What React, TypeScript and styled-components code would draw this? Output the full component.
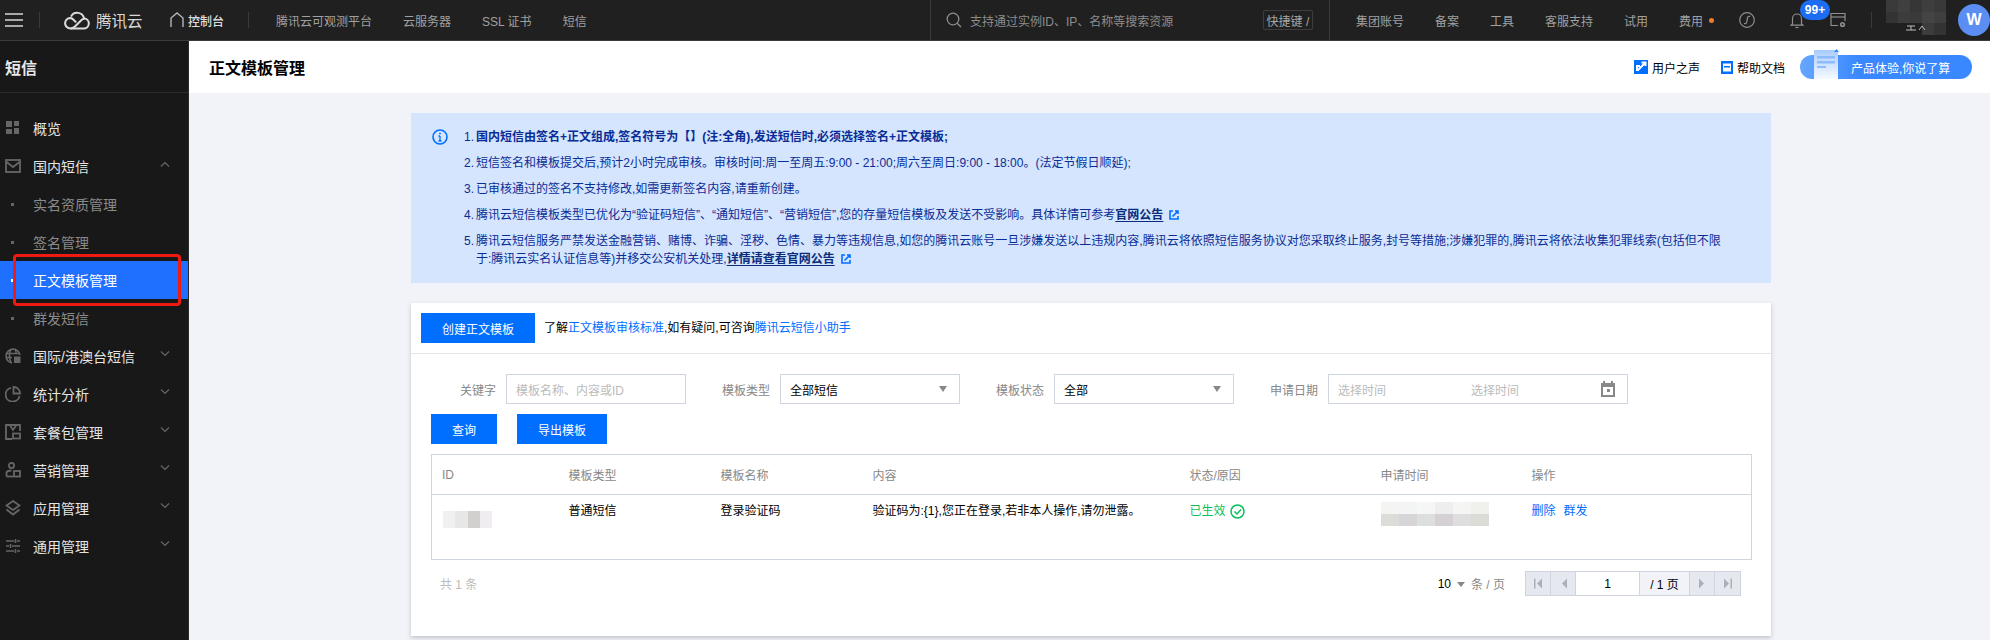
import React from 'react'
import styled, { createGlobalStyle } from 'styled-components'

const GlobalStyle = createGlobalStyle`
  html, body {
    margin: 0;
    padding: 0;
    width: 1990px;
    height: 640px;
    overflow: hidden;
    background: #f2f3f8;
  }
  * { box-sizing: border-box; }
  body {
    font-family: "Liberation Sans", "Noto Sans CJK SC", sans-serif;
    font-size: 12px;
    color: #000;
  }
`

const Page = styled.div`
  width: 1990px;
  height: 640px;
  display: flex;
  flex-direction: column;
  overflow: hidden;
`

/* top bar */
const TopBar = styled.header`
  height: 41px;
  flex: none;
  display: flex;
  align-items: center;
  background: #202020;
  border-bottom: 1px solid #3b3b3b;
  color: #a0a0a0;
`

const BarDivider = styled.span<{ $left: number; $right: number }>`
  width: 1px;
  height: 16px;
  flex: none;
  background: #3a3a3a;
  margin: 0 ${(p) => p.$right}px 0 ${(p) => p.$left}px;
`

const Burger = styled.span`
  margin-left: 5px;
  width: 18px;
  height: 14px;
  flex: none;
  border-top: 2px solid #a9a9a9;
  border-bottom: 2px solid #a9a9a9;
  position: relative;
  &::after {
    content: '';
    position: absolute;
    left: 0;
    right: 0;
    top: 4px;
    height: 2px;
    background: #a9a9a9;
  }
`

const LogoText = styled.span`
  font-size: 15.5px;
  color: #d8d8d8;
  margin-left: 6px;
  letter-spacing: 0;
  width: 47px;
  white-space: nowrap;
`

const ConsoleLink = styled.span`
  display: flex;
  align-items: center;
  gap: 4px;
  margin-left: 27px;
  color: #dedede;
  font-weight: 500;
`

const NavGroup = styled.nav`
  display: flex;
  gap: 31px;
  white-space: nowrap;
`

const SearchBox = styled.div`
  margin-left: auto;
  width: 400px;
  height: 40px;
  display: flex;
  align-items: center;
  border-left: 1px solid #3a3a3a;
  border-right: 1px solid #3a3a3a;
  padding-left: 15px;
  color: #8d8d8d;
`

const SearchText = styled.span`
  margin-left: 8px;
  flex: 1;
  white-space: nowrap;
`

const KeyHint = styled.span`
  width: 50px;
  height: 20px;
  margin-right: 16px;
  border: 1px solid #3d3d3d;
  border-radius: 2px;
  color: #a8a8a8;
  font-size: 12px;
  display: flex;
  align-items: center;
  justify-content: center;
  white-space: nowrap;
`

const RightGroup = styled.div`
  display: flex;
  align-items: center;
  margin-left: 26px;
  white-space: nowrap;
`

const FeeDot = styled.span`
  width: 5px;
  height: 5px;
  border-radius: 50%;
  background: #ed7b2f;
  margin-left: 6px;
`

const BellWrap = styled.span`
  position: relative;
  width: 14px;
  height: 18px;
  margin-left: 35px;
  display: flex;
`

const Badge = styled.span`
  position: absolute;
  left: 10px;
  top: -11px;
  width: 30px;
  height: 20px;
  border-radius: 10px;
  background: #1d6df2;
  color: #fff;
  font-size: 12px;
  font-weight: 700;
  display: flex;
  align-items: center;
  justify-content: center;
`

const Avatar = styled.span`
  width: 32px;
  height: 32px;
  border-radius: 50%;
  background: #5b8df2;
  color: #fff;
  font-size: 16px;
  font-weight: 700;
  display: flex;
  align-items: center;
  justify-content: center;
  margin-left: 12px;
`

const TopMosaicWrap = styled.div`
  position: relative;
  width: 60px;
  height: 40px;
  margin-left: 14px;
  align-self: flex-start;
`

const Mosaic = styled.div<{ $cols: number; $w: number; $h: number }>`
  width: ${(p) => p.$w}px;
  height: ${(p) => p.$h}px;
  display: grid;
  grid-template-columns: repeat(${(p) => p.$cols}, 1fr);
  grid-auto-rows: 1fr;
`

const Cell = styled.span<{ $c: string }>`
  background: ${(p) => p.$c};
`

const Fragment = styled.svg`
  position: absolute;
  left: 20px;
  top: 25px;
`

/* body */
const Body = styled.div`
  flex: 1;
  display: flex;
  min-height: 0;
`

const Sidebar = styled.aside`
  width: 189px;
  flex: none;
  background: #181818;
  border-right: 1px solid #2c2c2c;
  position: relative;
`

const SideTitle = styled.div`
  height: 52px;
  border-bottom: 1px solid #2c2c2c;
  display: flex;
  align-items: center;
  padding-left: 5px;
  color: #e8e8e8;
  font-size: 16px;
  font-weight: 700;
`

const Menu = styled.ul`
  list-style: none;
  margin: 16px 0 0;
  padding: 0;
`

const MenuRow = styled.li<{ $sub?: boolean; $active?: boolean }>`
  height: 38px;
  display: flex;
  align-items: center;
  font-size: 14px;
  padding-left: 5px;
  background: ${(p) => (p.$active ? '#1f70ff' : 'transparent')};
  color: ${(p) => (p.$active ? '#fff' : p.$sub ? '#8a8a8a' : '#e4e4e4')};
`

const MenuIcon = styled.span`
  width: 16px;
  height: 16px;
  margin-right: 12px;
  flex: none;
  display: flex;
`

const Dot = styled.span<{ $active?: boolean }>`
  width: 3px;
  height: 3px;
  margin: 0 19px 0 6px;
  flex: none;
  background: ${(p) => (p.$active ? '#fff' : '#666')};
`

const Chevron = styled.svg`
  margin-left: auto;
  margin-right: 18px;
  position: relative;
  top: -2px;
`

const RedMark = styled.div`
  position: absolute;
  left: 13px;
  top: 213px;
  width: 168px;
  height: 52px;
  border: 3px solid #f01a10;
  border-radius: 4px;
  pointer-events: none;
`

const Main = styled.main`
  flex: 1;
  min-width: 0;
`

const TitleBar = styled.div`
  height: 52px;
  background: #fff;
  display: flex;
  align-items: center;
  padding: 0 18px 0 20px;
`

const PageTitle = styled.h1`
  margin: 0;
  font-size: 16px;
  font-weight: 700;
  color: #000;
`

const HeadLinks = styled.div`
  margin-left: auto;
  display: flex;
  align-items: center;
`

const HeadLink = styled.span<{ $gap: number }>`
  display: flex;
  align-items: center;
  gap: 4px;
  margin-right: ${(p) => p.$gap}px;
  color: #000;
`

const FeedbackPill = styled.div`
  position: relative;
  width: 172px;
  height: 24px;
  border-radius: 12px;
  background: linear-gradient(90deg, #66a6ff 0%, #3a88ff 35%, #3a88ff 100%);
  color: #fff;
  display: flex;
  align-items: center;
  padding-left: 51px;
  white-space: nowrap;
`

const FeedbackDoc = styled.svg`
  position: absolute;
  left: 14px;
  top: -6px;
`

const Notice = styled.section`
  margin: 20px 0 0 222px;
  width: 1360px;
  height: 170px;
  background: #d4e5fd;
  display: flex;
  padding: 15px 0 0 21px;
`

const NoticeIcon = styled.svg`
  flex: none;
  margin-top: 1px;
`

const NoticeList = styled.ol`
  list-style: none;
  margin: 0 0 0 16px;
  padding: 0;
  width: 1268px;
  color: #0a2c96;
  line-height: 18px;
`

const NoticeItem = styled.li<{ $strong?: boolean }>`
  display: flex;
  margin-bottom: 8px;
  font-weight: ${(p) => (p.$strong ? 700 : 400)};
`

const NoticeNum = styled.span`
  width: 12px;
  flex: none;
  font-weight: 400;
`

const NoticeLink = styled.a`
  font-weight: 700;
  color: #0a2c7c;
  text-decoration: underline;
  text-underline-offset: 2px;
`

const ExtIcon = styled.svg`
  margin-left: 6px;
  vertical-align: -1px;
`

const Card = styled.section`
  margin: 20px 0 0 222px;
  width: 1360px;
  height: 333px;
  background: #fff;
  box-shadow: 0 2px 4px rgba(54, 58, 80, 0.25);
`

const ActionRow = styled.div`
  height: 51px;
  padding: 10px;
  display: flex;
  align-items: flex-start;
  border-bottom: 1px solid #e5e5e5;
`

const PrimaryButton = styled.button<{ $w: number }>`
  width: ${(p) => p.$w}px;
  height: 30px;
  flex: none;
  padding: 0;
  border: 0;
  background: #006eff;
  color: #fff;
  font: inherit;
`

const Hint = styled.span`
  margin-left: 9px;
  line-height: 30px;
`

const BlueText = styled.span`
  color: #006eff;
`

const Filters = styled.div`
  padding: 20px 0 0 49px;
  display: flex;
  align-items: center;
`

const FilterLabel = styled.label`
  color: #888;
  margin-right: 10px;
  white-space: nowrap;
`

const Field = styled.div<{ $w: number; $gap?: number }>`
  width: ${(p) => p.$w}px;
  height: 30px;
  margin-right: ${(p) => p.$gap ?? 36}px;
  border: 1px solid #cfd5de;
  display: flex;
  align-items: center;
  padding: 0 9px;
  flex: none;
`

const Placeholder = styled.span<{ $w?: number }>`
  color: #bbb;
  ${(p) => (p.$w ? `width: ${p.$w}px;` : '')}
`

const Caret = styled.span`
  margin-left: auto;
  margin-right: 3px;
  width: 0;
  height: 0;
  border-left: 4px solid transparent;
  border-right: 4px solid transparent;
  border-top: 6px solid #888;
`

const QueryRow = styled.div`
  display: flex;
  gap: 20px;
  padding: 10px 0 0 20px;
`

const Table = styled.table`
  margin: 10px 0 0 20px;
  width: 1320px;
  table-layout: fixed;
  border-collapse: collapse;
  border: 1px solid #cfd5de;
`

const HeadCell = styled.th`
  height: 40px;
  padding: 0 10px;
  text-align: left;
  font-weight: 400;
  color: #888;
  border-bottom: 1px solid #cfd5de;
`

const DataCell = styled.td<{ $pr?: number }>`
  height: 65px;
  padding: 7px ${(p) => p.$pr ?? 10}px 14px 10px;
  vertical-align: top;
  line-height: 18px;
`

const StatusText = styled.span`
  color: #0abf5b;
  display: flex;
  align-items: center;
  gap: 4px;
`

const CellMosaic = styled.div<{ $top: number }>`
  margin: ${(p) => p.$top}px 0 0 1px;
`

const OpLink = styled.a`
  color: #006eff;
  margin-right: 8px;
`

const TableFoot = styled.div`
  padding: 11px 10px 0 29px;
  width: 1340px;
  display: flex;
  align-items: center;
  height: 36px;
  color: #bbb;
`

const PageSize = styled.div`
  margin-left: auto;
  display: flex;
  align-items: center;
  margin-right: 20px;
  gap: 4px;
  color: #888;
`

const PageSizeNum = styled.span`
  color: #000;
`

const SmallCaret = styled.span`
  width: 0;
  height: 0;
  margin: 2px 2px 0 2px;
  border-left: 4px solid transparent;
  border-right: 4px solid transparent;
  border-top: 5px solid #888;
`

const Pager = styled.div`
  display: flex;
  height: 25px;
  border: 1px solid #cfd5de;
  margin-right: -0px;
`

const PagerBtn = styled.span`
  width: 25px;
  background: #e5e8ee;
  border-right: 1px solid #cfd5de;
  display: flex;
  align-items: center;
  justify-content: center;
  &:last-child {
    border-right: 0;
  }
`

const PagerInput = styled.span`
  width: 64px;
  background: #fff;
  border-right: 1px solid #cfd5de;
  color: #000;
  display: flex;
  align-items: center;
  justify-content: center;
`

const PagerTotal = styled.span`
  width: 50px;
  background: #f2f3f8;
  border-right: 1px solid #cfd5de;
  color: #000;
  display: flex;
  align-items: center;
  justify-content: center;
`

const stroke = '#666'

const CloudLogo = () => (
  <svg width="26" height="20" viewBox="0 0 26 20" fill="none" stroke="#dcdcdc" strokeWidth="2" style={{ marginLeft: 24 }}>
    <path d="M6.5 18.5h13a5 5 0 0 0 .6-10A7 7 0 0 0 7 6.6" />
    <path d="M12 12.5 C10 10 8.6 8 6.2 8 a5.2 5.2 0 0 0 .3 10.5 c2.5 0 4-1.5 6-3.5 l4-4 c1.2-1.2 2.2-2.3 4-2.5" />
  </svg>
)

const HomeIcon = () => (
  <svg width="14" height="16" viewBox="0 0 14 16" fill="none" stroke="#b5b5b5" strokeWidth="1.4">
    <path d="M1 15V6l6-5 6 5v9" />
    <path d="M5.5 15V9h3v6" strokeWidth="0" />
  </svg>
)

const SearchIcon = () => (
  <svg width="16" height="16" viewBox="0 0 16 16" fill="none" stroke="#8d8d8d" strokeWidth="1.3">
    <circle cx="7" cy="7" r="5.8" />
    <path d="M11.2 11.2 15 15" />
  </svg>
)

const SwirlIcon = () => (
  <svg width="16" height="16" viewBox="0 0 16 16" fill="none" stroke="#8f8f8f" strokeWidth="1.2" style={{ marginLeft: 25 }}>
    <circle cx="8" cy="8" r="7.3" />
    <path d="M5 11.5c1.8.5 2.6-.6 2.9-2.2l.5-3c.3-1.6 1.2-2.4 2.8-1.9" />
  </svg>
)

const BellIcon = () => (
  <svg width="14" height="18" viewBox="0 0 14 18" fill="none" stroke="#8f8f8f" strokeWidth="1.2">
    <path d="M2.5 13V7.5a4.5 4.5 0 0 1 9 0V13l1.5 1.2H1z" />
    <path d="M5.5 16.5h3" />
  </svg>
)

const ConsoleGear = () => (
  <svg width="16" height="16" viewBox="0 0 16 16" fill="none" stroke="#8f8f8f" strokeWidth="1.2" style={{ marginLeft: 26 }}>
    <path d="M8 13.5H1V1.5h14V9" />
    <path d="M1 5h14" />
    <circle cx="12.5" cy="12.5" r="1.8" strokeWidth="1.6" />
  </svg>
)

const icons: Record<string, React.ReactNode> = {
  overview: (
    <svg width="16" height="16" viewBox="0 0 16 16" fill={stroke}>
      <rect x="1" y="1" width="6" height="6" />
      <rect x="9" y="1" width="5" height="5" />
      <rect x="1" y="9" width="6" height="5" />
      <rect x="9" y="8" width="5" height="6" />
    </svg>
  ),
  mail: (
    <svg width="16" height="16" viewBox="0 0 16 16" fill="none" stroke={stroke} strokeWidth="1.8">
      <rect x="1" y="2" width="14" height="12" />
      <path d="M1.5 4 8 9l6.5-5" />
    </svg>
  ),
  globe: (
    <svg width="16" height="16" viewBox="0 0 16 16" fill="none" stroke={stroke} strokeWidth="1.6">
      <path d="M7 15A7 7 0 1 1 15 7" />
      <path d="M1 5.5h13M1 9.5h6M6 1c-2 4-2 9 0 13.500M10 1c.8 1.500 1.200 3 1.300 5" />
      <rect x="9" y="8.500" width="6.500" height="6.500" fill={stroke} stroke="none" />
    </svg>
  ),
  pie: (
    <svg width="16" height="16" viewBox="0 0 16 16" fill="none" stroke={stroke} strokeWidth="1.800">
      <path d="M6 1.800A7 7 0 1 0 14.500 10" />
      <path d="M8.500 1v6.500H15A6.500 6.500 0 0 0 8.500 1z" />
    </svg>
  ),
  pack: (
    <svg width="16" height="16" viewBox="0 0 16 16" fill="none" stroke={stroke} strokeWidth="1.800">
      <path d="M7 15H1V1h14v6" />
      <path d="M5 1.500 8 6l3-4.500" />
      <rect x="8" y="9.500" width="7" height="5" />
    </svg>
  ),
  user: (
    <svg width="16" height="16" viewBox="0 0 16 16" fill="none" stroke={stroke} strokeWidth="1.800">
      <circle cx="6.500" cy="3.500" r="2.600" />
      <path d="M1.500 14.500V11c0-1.500 2-2.500 5-2.500" />
      <rect x="9" y="9" width="6" height="5.500" />
      <path d="M1.500 14.500h7" />
    </svg>
  ),
  layers: (
    <svg width="16" height="16" viewBox="0 0 16 16" fill="none" stroke={stroke} strokeWidth="1.800">
      <path d="M8 1 14.500 5.500 8 10 1.500 5.500z" />
      <path d="M1.500 9.500 8 14.500l6.500-5" />
    </svg>
  ),
  sliders: (
    <svg width="16" height="16" viewBox="0 0 16 16" fill="none" stroke={stroke} strokeWidth="1.600">
      <path d="M1 3h8M12 3h3M1 8h3M7 8h8M1 13h8M12 13h3" />
      <path d="M10.500 1v4M5.500 6v4M10.500 11v4" />
    </svg>
  )
}

const DownChevron = ({ up }: { up?: boolean }) => (
  <Chevron width="10" height="6" viewBox="0 0 10 6" fill="none" stroke="#666" strokeWidth="1.200">
    <path d={up ? 'M1 5.500 5 1.500l4 4' : 'M1 .5l4 4 4-4'} />
  </Chevron>
)

const menuItems = [
  { label: '概览', icon: 'overview' },
  { label: '国内短信', icon: 'mail', open: true },
  { label: '实名资质管理', sub: true },
  { label: '签名管理', sub: true },
  { label: '正文模板管理', sub: true, active: true },
  { label: '群发短信', sub: true },
  { label: '国际/港澳台短信', icon: 'globe', arrow: true },
  { label: '统计分析', icon: 'pie', arrow: true },
  { label: '套餐包管理', icon: 'pack', arrow: true },
  { label: '营销管理', icon: 'user', arrow: true },
  { label: '应用管理', icon: 'layers', arrow: true },
  { label: '通用管理', icon: 'sliders', arrow: true }
]

const topMosaic = [
  '#3a3a3a', '#404040', '#363636', '#3e3e3e', '#393939',
  '#333333', '#3c3c3c', '#3a3a3a', '#444444', '#3f3f3f',
  'transparent', 'transparent', 'transparent', '#3c3c3c', '#333333'
]
const idMosaic = ['#f1f0f1', '#e9e6e8', '#d2d0cf', '#efedef']
const timeMosaic = [
  '#f4f5f3', '#f3f5f4', '#f5f6f5', '#eeeeee', '#f5f5f3', '#f0f0ec',
  '#dcdcd8', '#d8d5d9', '#dddfdf', '#d4d0d4', '#dedede', '#dcdcd6'
]

const External = () => (
  <ExtIcon width="10" height="10" viewBox="0 0 10 10" fill="none" stroke="#006eff" strokeWidth="1.600">
    <path d="M4 1H1v8h8V6" />
    <path d="M3.500 6.500 9 1M6 1h3v3" />
  </ExtIcon>
)

const PagerGlyph = ({ dir, edge }: { dir: 'l' | 'r'; edge?: boolean }) => (
  <svg width="9" height="11" viewBox="0 0 9 11" fill="#a9b0bb">
    {dir === 'l' ? (
      <>
        {edge && <rect x="0" y="0.500" width="1.500" height="10" />}
        <path d="M8 .5v10L3 5.500z" />
      </>
    ) : (
      <>
        <path d="M1 .5v10l5-5z" />
        {edge && <rect x="7.500" y="0.500" width="1.500" height="10" />}
      </>
    )}
  </svg>
)

export default function App() {
  return (
    <Page>
      <GlobalStyle />
      <TopBar>
        <Burger />
        <BarDivider $left={16} $right={0} />
        <CloudLogo />
        <LogoText>腾讯云</LogoText>
        <ConsoleLink>
          <HomeIcon />
          控制台
        </ConsoleLink>
        <BarDivider $left={24} $right={27} />
        <NavGroup>
          <span>腾讯云可观测平台</span>
          <span>云服务器</span>
          <span>SSL 证书</span>
          <span>短信</span>
        </NavGroup>
        <SearchBox>
          <SearchIcon />
          <SearchText>支持通过实例ID、IP、名称等搜索资源</SearchText>
          <KeyHint>快捷键 /</KeyHint>
        </SearchBox>
        <RightGroup>
          <NavGroup>
            <span>集团账号</span>
            <span>备案</span>
            <span>工具</span>
            <span>客服支持</span>
            <span>试用</span>
            <span>费用</span>
          </NavGroup>
          <FeeDot />
          <SwirlIcon />
          <BellWrap>
            <BellIcon />
            <Badge>99+</Badge>
          </BellWrap>
          <ConsoleGear />
          <BarDivider $left={25} $right={0} />
          <TopMosaicWrap>
            <Mosaic $cols={5} $w={60} $h={35}>
              {topMosaic.map((c, i) => (
                <Cell key={i} $c={c} />
              ))}
            </Mosaic>
            <Fragment width="20" height="6" viewBox="0 0 20 6" fill="none" stroke="#bcbcbc" strokeWidth="1">
              <path d="M1 1h8M5 1v4M0 5h10M13 5l3-4 3 4" />
            </Fragment>
          </TopMosaicWrap>
          <Avatar>W</Avatar>
        </RightGroup>
      </TopBar>
      <Body>
        <Sidebar>
          <SideTitle>短信</SideTitle>
          <Menu>
            {menuItems.map((item) => (
              <MenuRow key={item.label} $sub={item.sub} $active={item.active}>
                {item.sub ? (
                  <Dot $active={item.active} />
                ) : (
                  <MenuIcon>{icons[item.icon as string]}</MenuIcon>
                )}
                {item.label}
                {item.open && <DownChevron up />}
                {item.arrow && <DownChevron />}
              </MenuRow>
            ))}
          </Menu>
          <RedMark />
        </Sidebar>
        <Main>
          <TitleBar>
            <PageTitle>正文模板管理</PageTitle>
            <HeadLinks>
              <HeadLink $gap={21}>
                <svg width="14" height="14" viewBox="0 0 14 14">
                  <rect width="14" height="14" fill="#006eff" />
                  <path d="M3 11V6h3M3.500 10.500 11 3M7.500 2.500H11.500V6" fill="none" stroke="#fff" strokeWidth="2" />
                </svg>
                用户之声
              </HeadLink>
              <HeadLink $gap={15}>
                <svg width="12" height="13" viewBox="0 0 12 13">
                  <rect width="12" height="13" fill="#006eff" />
                  <rect x="2" y="2.500" width="8" height="8" fill="#fff" />
                  <rect x="3" y="5" width="6" height="1.500" fill="#006eff" />
                </svg>
                帮助文档
              </HeadLink>
              <FeedbackPill>
                <FeedbackDoc width="26" height="30" viewBox="0 0 26 30">
                  <defs>
                    <linearGradient id="docFill" x1="0" y1="0" x2="0" y2="1">
                      <stop offset="0" stopColor="#a8ccff" />
                      <stop offset="1" stopColor="#f6faff" />
                    </linearGradient>
                  </defs>
                  <path d="M0 1h22l2 2v27H0z" fill="url(#docFill)" />
                  <path d="M20 3l2.500-3L25 3z" fill="#3a88ff" />
                  <path d="M3 7h18v2.500H3zM3 12h18v2.500H3zM3 17h9v2H3z" fill="#8dbbfb" />
                </FeedbackDoc>
                产品体验,你说了算
              </FeedbackPill>
            </HeadLinks>
          </TitleBar>
          <Notice>
            <NoticeIcon width="16" height="16" viewBox="0 0 16 16" fill="none" stroke="#006eff" strokeWidth="1.600">
              <circle cx="8" cy="8" r="7" />
              <path d="M8 7v5M6.500 7H8M6.500 12h3" strokeWidth="1.300" />
              <path d="M8 3.800v1.500" strokeWidth="1.600" />
            </NoticeIcon>
            <NoticeList>
              <NoticeItem $strong>
                <NoticeNum>1.</NoticeNum>
                <span>国内短信由签名+正文组成,签名符号为【】(注:全角),发送短信时,必须选择签名+正文模板;</span>
              </NoticeItem>
              <NoticeItem>
                <NoticeNum>2.</NoticeNum>
                <span>短信签名和模板提交后,预计2小时完成审核。审核时间:周一至周五:9:00 - 21:00;周六至周日:9:00 - 18:00。(法定节假日顺延);</span>
              </NoticeItem>
              <NoticeItem>
                <NoticeNum>3.</NoticeNum>
                <span>已审核通过的签名不支持修改,如需更新签名内容,请重新创建。</span>
              </NoticeItem>
              <NoticeItem>
                <NoticeNum>4.</NoticeNum>
                <span>
                  腾讯云短信模板类型已优化为“验证码短信”、“通知短信”、“营销短信”,您的存量短信模板及发送不受影响。具体详情可参考
                  <NoticeLink>官网公告</NoticeLink>
                  <External />
                </span>
              </NoticeItem>
              <NoticeItem>
                <NoticeNum>5.</NoticeNum>
                <span>
                  腾讯云短信服务严禁发送金融营销、赌博、诈骗、淫秽、色情、暴力等违规信息,如您的腾讯云账号一旦涉嫌发送以上违规内容,腾讯云将依照短信服务协议对您采取终止服务,封号等措施;涉嫌犯罪的,腾讯云将依法收集犯罪线索(包括但不限于:腾讯云实名认证信息等)并移交公安机关处理,
                  <NoticeLink>详情请查看官网公告</NoticeLink>
                  <External />
                </span>
              </NoticeItem>
            </NoticeList>
          </Notice>
          <Card>
            <ActionRow>
              <PrimaryButton $w={114}>创建正文模板</PrimaryButton>
              <Hint>
                了解<BlueText>正文模板审核标准</BlueText>,如有疑问,可咨询<BlueText>腾讯云短信小助手</BlueText>
              </Hint>
            </ActionRow>
            <Filters>
              <FilterLabel>关键字</FilterLabel>
              <Field $w={180}>
                <Placeholder>模板名称、内容或ID</Placeholder>
              </Field>
              <FilterLabel>模板类型</FilterLabel>
              <Field $w={180}>
                全部短信
                <Caret />
              </Field>
              <FilterLabel>模板状态</FilterLabel>
              <Field $w={180}>
                全部
                <Caret />
              </Field>
              <FilterLabel>申请日期</FilterLabel>
              <Field $w={300} $gap={0}>
                <Placeholder $w={133}>选择时间</Placeholder>
                <Placeholder>选择时间</Placeholder>
                <svg width="14" height="16" viewBox="0 0 14 16" fill="#888" style={{ marginLeft: 'auto', marginRight: 3 }}>
                  <path d="M2 0h2v2h6V0h2v2h2v14H0V2h2zM2 6v8h10V6z" />
                  <rect x="6" y="8" width="3" height="3" />
                </svg>
              </Field>
            </Filters>
            <QueryRow>
              <PrimaryButton $w={66}>查询</PrimaryButton>
              <PrimaryButton $w={90}>导出模板</PrimaryButton>
            </QueryRow>
            <Table>
              <colgroup>
                <col width="127" />
                <col width="152" />
                <col width="152" />
                <col width="317" />
                <col width="191" />
                <col width="151" />
                <col width="230" />
              </colgroup>
              <thead>
                <tr>
                  <HeadCell>ID</HeadCell>
                  <HeadCell>模板类型</HeadCell>
                  <HeadCell>模板名称</HeadCell>
                  <HeadCell>内容</HeadCell>
                  <HeadCell>状态/原因</HeadCell>
                  <HeadCell>申请时间</HeadCell>
                  <HeadCell>操作</HeadCell>
                </tr>
              </thead>
              <tbody>
                <tr>
                  <DataCell>
                    <CellMosaic $top={9}>
                      <Mosaic $cols={4} $w={49} $h={17}>
                        {idMosaic.map((c, i) => (
                          <Cell key={i} $c={c} />
                        ))}
                      </Mosaic>
                    </CellMosaic>
                  </DataCell>
                  <DataCell>普通短信</DataCell>
                  <DataCell>登录验证码</DataCell>
                  <DataCell $pr={28}>验证码为:{'{1}'},您正在登录,若非本人操作,请勿泄露。</DataCell>
                  <DataCell>
                    <StatusText>
                      已生效
                      <svg width="15" height="15" viewBox="0 0 15 15" fill="none" stroke="#0abf5b" strokeWidth="1.500">
                        <circle cx="7.500" cy="7.500" r="6.500" />
                        <path d="M4.500 7.500 7 10l4-4.500" />
                      </svg>
                    </StatusText>
                  </DataCell>
                  <DataCell>
                    <Mosaic $cols={6} $w={108} $h={24}>
                      {timeMosaic.map((c, i) => (
                        <Cell key={i} $c={c} />
                      ))}
                    </Mosaic>
                  </DataCell>
                  <DataCell>
                    <OpLink>删除</OpLink>
                    <OpLink>群发</OpLink>
                  </DataCell>
                </tr>
              </tbody>
            </Table>
            <TableFoot>
              <span>共 1 条</span>
              <PageSize>
                <PageSizeNum>10</PageSizeNum>
                <SmallCaret />
                <span>条 / 页</span>
              </PageSize>
              <Pager>
                <PagerBtn>
                  <PagerGlyph dir="l" edge />
                </PagerBtn>
                <PagerBtn>
                  <PagerGlyph dir="l" />
                </PagerBtn>
                <PagerInput>1</PagerInput>
                <PagerTotal>/ 1 页</PagerTotal>
                <PagerBtn>
                  <PagerGlyph dir="r" />
                </PagerBtn>
                <PagerBtn>
                  <PagerGlyph dir="r" edge />
                </PagerBtn>
              </Pager>
            </TableFoot>
          </Card>
        </Main>
      </Body>
    </Page>
  )
}
